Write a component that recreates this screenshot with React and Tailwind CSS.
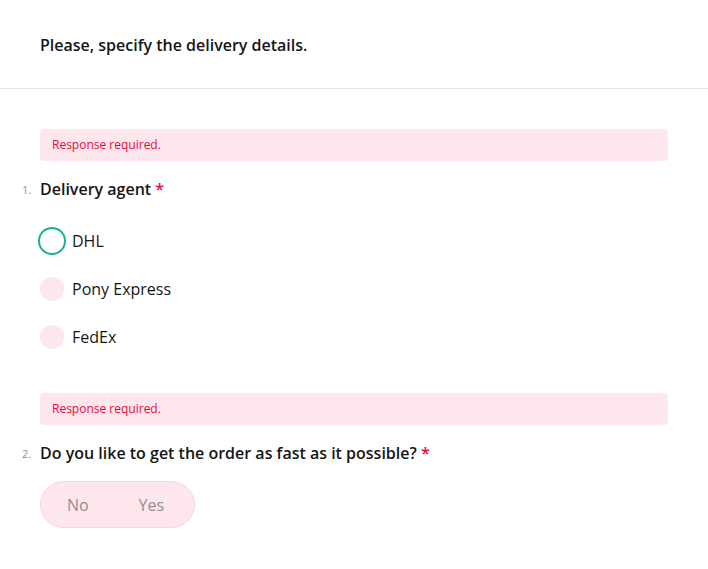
const agents = ["DHL", "Pony Express", "FedEx"];

const ErrorBox = () => (
    <div className="h-8 rounded bg-[#fde6ec] px-3 flex items-center text-[12px] text-[#e60a3e]">
        Response required.
    </div>
);

const QuestionTitle = ({ num, text }) => (
    <div className="relative flex items-center h-6 mt-4">
        <span className="absolute -left-[18px] top-[5px] text-[11px] leading-4 text-[#909090]">{num}.</span>
        <span className="text-[16px] font-semibold text-[#161616]">
            {text} <span className="text-[#e60a3e]">*</span>
        </span>
    </div>
);

export default function App() {
    return (
        <div className="w-[708px] h-[569px] bg-white overflow-hidden" style={{ fontFamily: '"Open Sans", sans-serif' }}>
            {/* Header */}
            <div className="h-[89px] flex items-center px-10 border-b border-[#e6e6e6]">
                <h1 className="text-[16px] font-semibold text-[#161616] pt-[2px]">Please, specify the delivery details.</h1>
            </div>

            <div className="pl-10 pr-10 pt-10">
                {/* Question 1 */}
                <ErrorBox />
                <QuestionTitle num={1} text="Delivery agent" />
                <div className="mt-4">
                    {agents.map((agent, i) => (
                        <div key={agent} className="h-12 flex items-center gap-2">
                            {i === 0 ? (
                                <span className="w-6 h-6 rounded-full bg-white ring-2 ring-[#19b394]" />
                            ) : (
                                <span className="w-6 h-6 rounded-full bg-[#fde6ec]" />
                            )}
                            <span className="text-[16px] text-[#161616]">{agent}</span>
                        </div>
                    ))}
                </div>

                {/* Question 2 */}
                <div className="mt-8">
                    <ErrorBox />
                    <QuestionTitle num={2} text="Do you like to get the order as fast as it possible?" />
                    <div className="mt-4 w-[155px] h-[47px] rounded-full bg-[#fde6ec] border border-[#f6d6de] flex text-[16px] text-[#909090]">
                        <span className="flex-1 flex items-center justify-center">No</span>
                        <span className="flex-1 flex items-center justify-center pr-[6px]">Yes</span>
                    </div>
                </div>
            </div>
        </div>
    );
}
